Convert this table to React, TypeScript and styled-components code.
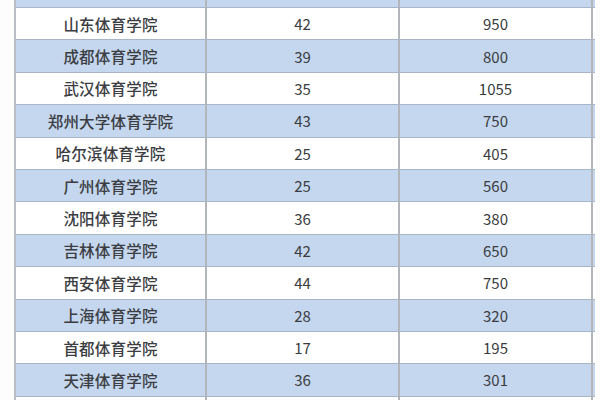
import React from 'react';
import styled, { createGlobalStyle } from 'styled-components';

const GlobalStyle = createGlobalStyle`
  html, body {
    margin: 0;
    padding: 0;
    background: #ffffff;
  }
`;

const Page = styled.div`
  width: 600px;
  height: 400px;
  overflow: hidden;
  background: #fdfdfd;
  padding-left: 14px;
  box-sizing: border-box;
`;

const Table = styled.div`
  width: 581px;
  margin-top: -24.4px;
  border-left: 2px solid #b9bdc2;
  box-sizing: border-box;
`;

const Row = styled.div<{ $striped?: boolean }>`
  display: grid;
  grid-template-columns: 191px 193px 193px;
  height: 32.4px;
  box-sizing: border-box;
  border-bottom: 1.5px solid #a7b5c7;
  background: ${props => (props.$striped ? '#c4d7ef' : '#ffffff')};
`;

const Cell = styled.div<{ $name?: boolean }>`
  display: flex;
  align-items: center;
  justify-content: center;
  border-right: 2px solid #b2b6bb;
  font-family: 'Noto Sans CJK SC', 'Noto Sans', sans-serif;
  font-size: ${props => (props.$name ? '15.5px' : '15px')};
  font-weight: ${props => (props.$name ? 500 : 400)};
  color: ${props => (props.$name ? '#3b3d42' : '#3a3c40')};
  letter-spacing: ${props => (props.$name ? '0.2px' : '0')};
`;

// first and last rows are only partly in view, so they stay empty
const rows = [
  ['', '', ''],
  ['山东体育学院', '42', '950'],
  ['成都体育学院', '39', '800'],
  ['武汉体育学院', '35', '1055'],
  ['郑州大学体育学院', '43', '750'],
  ['哈尔滨体育学院', '25', '405'],
  ['广州体育学院', '25', '560'],
  ['沈阳体育学院', '36', '380'],
  ['吉林体育学院', '42', '650'],
  ['西安体育学院', '44', '750'],
  ['上海体育学院', '28', '320'],
  ['首都体育学院', '17', '195'],
  ['天津体育学院', '36', '301'],
  ['', '', ''],
];

export default function App() {
  return (
    <>
      <GlobalStyle />
      <Page>
        <Table>
          {rows.map((r, i) => (
            <Row key={i} $striped={i % 2 === 0}>
              <Cell $name>{r[0]}</Cell>
              <Cell>{r[1]}</Cell>
              <Cell>{r[2]}</Cell>
            </Row>
          ))}
        </Table>
      </Page>
    </>
  );
}
